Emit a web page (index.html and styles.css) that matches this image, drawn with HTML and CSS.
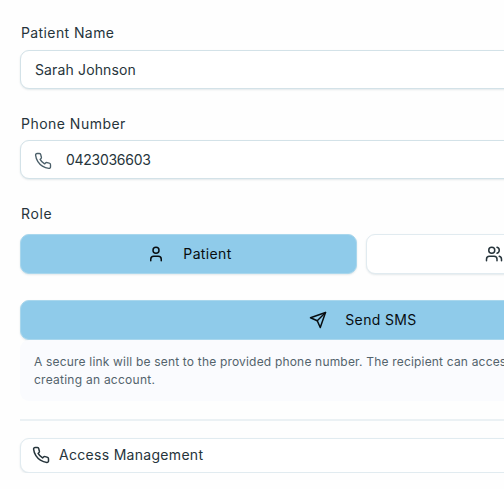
FILE: index.html
```html
<!DOCTYPE html>
<html lang="en">
<head>
<meta charset="utf-8">
<title>Patient access</title>
<link rel="stylesheet" href="styles.css">
</head>
<body>
<svg width="0" height="0" class="defs">
  <symbol id="phone" viewBox="0 0 24 24"><path d="M22 16.92v3a2 2 0 0 1-2.18 2 19.79 19.79 0 0 1-8.63-3.07 19.5 19.5 0 0 1-6-6 19.79 19.79 0 0 1-3.07-8.67A2 2 0 0 1 4.11 2h3a2 2 0 0 1 2 1.72 12.84 12.84 0 0 0 .7 2.81 2 2 0 0 1-.45 2.11L8.09 9.91a16 16 0 0 0 6 6l1.27-1.27a2 2 0 0 1 2.11-.45 12.84 12.84 0 0 0 2.81.7A2 2 0 0 1 22 16.92z"/></symbol>
</svg>
<main class="form">
  <div class="label label-name">Patient Name</div>
  <div class="field"><span class="value value-name">Sarah Johnson</span></div>

  <div class="label label-phone">Phone Number</div>
  <div class="field"><svg class="icon muted"><use href="#phone"/></svg><span class="value value-phone">0423036603</span></div>

  <div class="label label-role">Role</div>
  <div class="roles">
    <button class="button primary patient"><svg class="icon" viewBox="0 0 24 24"><path d="M19 21v-2a4 4 0 0 0-4-4H9a4 4 0 0 0-4 4v2"/><circle cx="12" cy="7" r="4"/></svg><span class="text-patient">Patient</span></button>
    <button class="button outline"><svg class="icon" viewBox="0 0 24 24"><path d="M16 21v-2a4 4 0 0 0-4-4H6a4 4 0 0 0-4 4v2"/><circle cx="9" cy="7" r="4"/><path d="M22 21v-2a4 4 0 0 0-3-3.87M16 3.13a4 4 0 0 1 0 7.75"/></svg></button>
  </div>

  <button class="button primary send"><svg class="icon" viewBox="0 0 24 24"><path d="m22 2-7 20-4-9-9-4Z"/><path d="M22 2 11 13"/></svg><span class="text-send">Send SMS</span></button>
  <p class="note"><span class="note-first">A secure link will be sent to the provided phone number. The recipient can access</span><br><span class="note-second">creating an account.</span></p>
  <hr class="divider">
  <button class="access"><svg class="icon"><use href="#phone"/></svg><span class="text-access">Access Management</span></button>
</main>
</body>
</html>
```
FILE: styles.css
```css
* { box-sizing: border-box; }
body {
  margin: 0;
  overflow: hidden;
  background: #fefefe;
  color: #26343b;
  font: 14px/20px Inter, "Liberation Sans", sans-serif;
}
.defs { display: block; }
.form { width: 683px; margin-left: 20px; padding-top: 23px; display: flex; flex-direction: column; }
.label { height: 20px; padding-left: 1px; margin-bottom: 7px; }
.label-name { letter-spacing: .4px; }
.label-phone { letter-spacing: .48px; margin-bottom: 6px; }
.label-role { letter-spacing: .6px; margin-bottom: 10px; }
.field {
  display: flex;
  align-items: center;
  gap: 14px;
  height: 39px;
  margin-bottom: 25px;
  padding: 0 14px;
  border: 1px solid #d3e2e8;
  border-radius: 9px;
  background: #fff;
  box-shadow: 0 1px 2px rgba(30, 70, 90, .12);
}
.value-name { letter-spacing: .14px; }
.value-phone { letter-spacing: -.28px; }
.icon { width: 18px; height: 18px; flex: none; fill: none; stroke: currentColor; stroke-width: 2; stroke-linecap: round; stroke-linejoin: round; }
.muted { color: #4b5f69; stroke-width: 1.8; margin: 2px 0 0 -1px; }
.roles { display: grid; grid-template-columns: 1fr 1fr; gap: 9px; margin-bottom: 26px; }
.button {
  display: flex;
  align-items: center;
  justify-content: center;
  gap: 18px;
  height: 40px;
  padding: 0;
  border: 1px solid #a9d7ed;
  border-radius: 9px;
  font: inherit;
  box-shadow: 0 1px 2px rgba(30, 70, 90, .12);
}
.primary { background: #8fcbea; color: #080d10; }
.patient { padding-left: 2px; }
.send { padding-left: 3px; }
.outline { justify-content: flex-start; padding-left: 118px; background: #fff; color: #26343b; border-color: #e1ebf0; }
.text-patient, .text-send { letter-spacing: .36px; }
.note {
  height: 61px;
  margin: 0;
  padding: 13px 14px 0;
  border-radius: 9px;
  background: #fafbfe;
  color: #53636c;
  font-size: 12px;
  line-height: 18px;
  white-space: nowrap;
}
.note-first { letter-spacing: .185px; }
.note-second { letter-spacing: .25px; }
.divider { width: 100%; height: 2px; margin: 18px 0 17px; border: 0; background: #ebf1f4; }
.access {
  display: flex;
  align-items: center;
  gap: 9px;
  height: 35px;
  padding: 0 11px 1px;
  border: 1px solid #e1ebf0;
  border-radius: 9px;
  background: #fff;
  color: #26343b;
  font: inherit;
  box-shadow: 0 1px 2px rgba(30, 70, 90, .13);
}
.text-access { letter-spacing: .3px; }
```
